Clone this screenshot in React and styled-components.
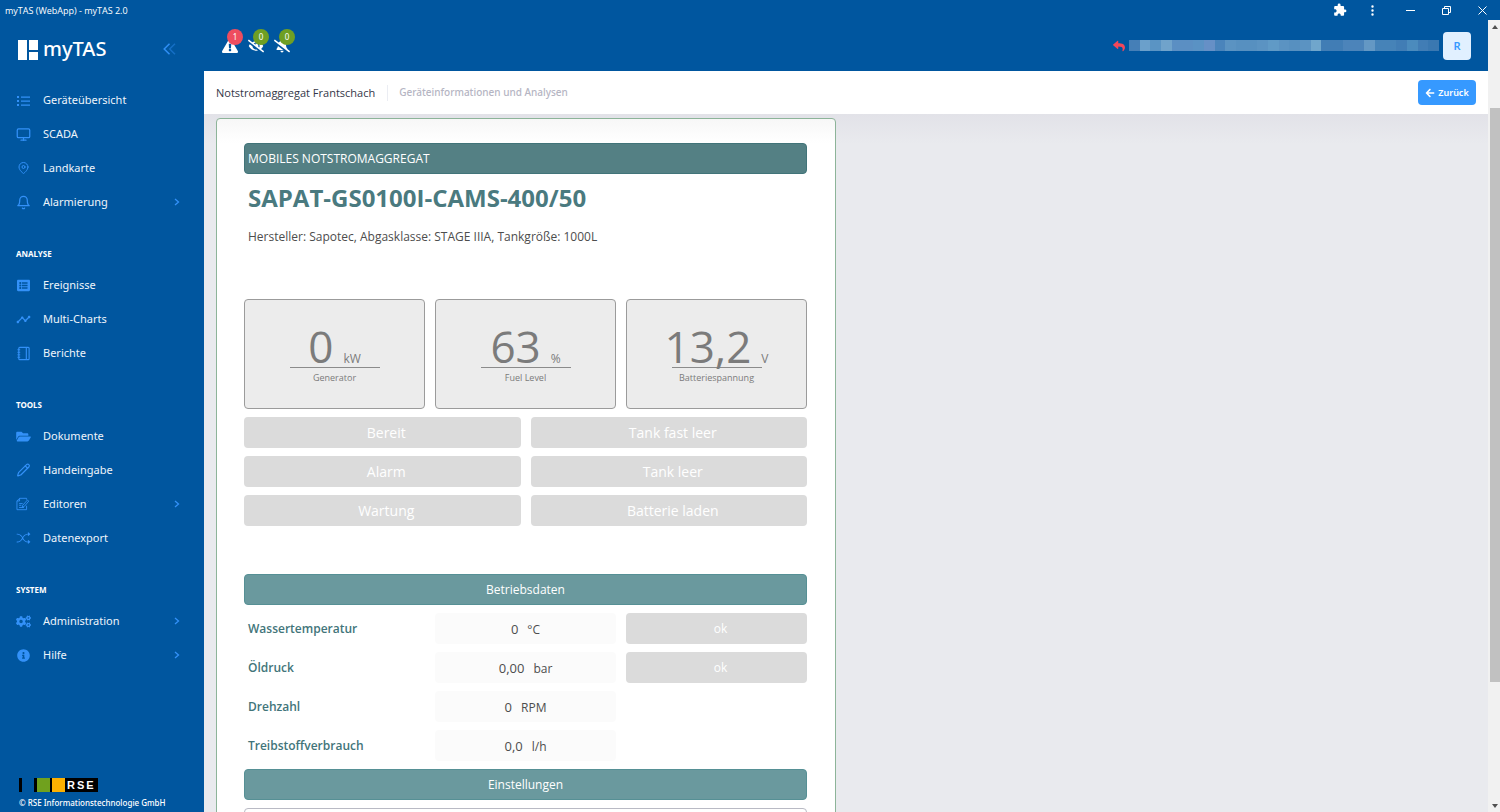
import React from "react";
import styled, { createGlobalStyle } from "styled-components";
import {
  FaArrowLeft,
  FaBellSlash,
  FaCogs,
  FaExclamationTriangle,
  FaEyeSlash,
  FaFolderOpen,
  FaInfoCircle,
  FaListAlt,
  FaReply,
} from "react-icons/fa";
import { BsShuffle, BsThreeDotsVertical } from "react-icons/bs";
import { FiBell, FiMapPin, FiMonitor } from "react-icons/fi";
import { LuPencil } from "react-icons/lu";
import { MdExtension, MdTimeline } from "react-icons/md";

const ListIcon = ({ className }) => (
  <svg className={className} viewBox="0 0 15 15" width="1em" height="1em" fill="currentColor">
    <path d="M1 3h2v2H1zM1 7h2v2H1zM1 11h2v2H1zM5 3.500h9v1.200H5zM5 7.500h9v1.200H5zM5 11.500h9v1.200H5z" />
  </svg>
);

const JournalIcon = ({ className }) => (
  <svg className={className} viewBox="0 0 16 16" width="1em" height="1em" fill="none" stroke="currentColor">
    <rect x="3" y="1.5" width="11" height="13" rx="1" strokeWidth="1.2" />
    <path d="M11 1.500v13" strokeWidth="1.2" />
    <path d="M1.500 4h3M1.500 6.700h3M1.500 9.400h3M1.500 12h3" />
  </svg>
);

const EditDocIcon = ({ className }) => (
  <svg className={className} viewBox="0 0 16 16" width="1em" height="1em" fill="none" stroke="currentColor">
    <path d="M11.500 3V1.500H3.500L.5 4.500v10h11V10" />
    <path d="M3.500 1.500v3h-3M3 7.500h4M3 9.500h2.500M3 12h5.500" />
    <path d="M7 9.500L12.500 3.500l1.500 1.200L8.700 11l-2 .5z" />
  </svg>
);

const navGroups = [
  {
    title: null,
    items: [
      { icon: ListIcon, name: "Geräteübersicht" },
      { icon: FiMonitor, name: "SCADA" },
      { icon: FiMapPin, name: "Landkarte", size: 12 },
      { icon: FiBell, name: "Alarmierung", more: true },
    ],
  },
  {
    title: "ANALYSE",
    items: [
      { icon: FaListAlt, name: "Ereignisse", size: 13 },
      { icon: MdTimeline, name: "Multi-Charts" },
      { icon: JournalIcon, name: "Berichte" },
    ],
  },
  {
    title: "TOOLS",
    items: [
      { icon: FaFolderOpen, name: "Dokumente", size: 13 },
      { icon: LuPencil, name: "Handeingabe", size: 14 },
      { icon: EditDocIcon, name: "Editoren", size: 14, more: true },
      { icon: BsShuffle, name: "Datenexport", size: 14 },
    ],
  },
  {
    title: "SYSTEM",
    items: [
      { icon: FaCogs, name: "Administration", more: true },
      { icon: FaInfoCircle, name: "Hilfe", size: 13, more: true },
    ],
  },
];

const alerts = [
  { icon: FaExclamationTriangle, count: 1, color: "#ee4d5f", label: "Alarme" },
  { icon: FaEyeSlash, count: 0, color: "#6f9f23", label: "Ausgeblendet" },
  { icon: FaBellSlash, count: 0, color: "#6f9f23", label: "Stumm" },
];

const maskedUser = [
  "#457fb7", "#6ba0cb", "#5a94c4", "#70a3cb", "#5b8fc3", "#5b8fc3", "#5a92c4",
  "#6690c6", "#4a84bb", "#5b93c2", "#5790c0", "#5790c0", "#5b93c2", "#609ac6",
  "#5b93c2", "#5790c0", "#5b93c2", "#70a6cc", "#417db5", "#417db5", "#4c84ba",
  "#4c84ba", "#6498c4", "#4683b8", "#4683b8", "#417db5", "#4b8bbd", "#417db5",
  "#3a78b1",
];

const gauges = [
  { value: "0", unit: "kW", name: "Generator" },
  { value: "63", unit: "%", name: "Fuel Level" },
  { value: "13,2", unit: "V", name: "Batteriespannung" },
];

const states = ["Bereit", "Tank fast leer", "Alarm", "Tank leer", "Wartung", "Batterie laden"];

const readings = [
  { name: "Wassertemperatur", value: "0", unit: "°C", state: "ok" },
  { name: "Öldruck", value: "0,00", unit: "bar", state: "ok" },
  { name: "Drehzahl", value: "0", unit: "RPM" },
  { name: "Treibstoffverbrauch", value: "0,0", unit: "l/h" },
];

const Chevron = () => (
  <svg width="6" height="8" viewBox="0 0 6 8" fill="none" stroke="currentColor" strokeWidth="1.300">
    <path d="M1 1l3.500 3L1 7" />
  </svg>
);

const App = () => {
  return (
    <>
      <GlobalStyle />
      <Window>
        <TitleBar>
          <span>myTAS (WebApp) - myTAS 2.0</span>
          <WindowControls>
            <button aria-label="Erweiterungen"><MdExtension size={14} /></button>
            <button aria-label="Menü"><BsThreeDotsVertical size={13} /></button>
            <button aria-label="Minimieren">
              <svg width="9" height="9" viewBox="0 0 9 9" stroke="currentColor"><path d="M0 4.500h9" /></svg>
            </button>
            <button aria-label="Verkleinern">
              <svg width="9" height="9" viewBox="0 0 9 9" fill="none" stroke="currentColor">
                <path d="M.5 2.500h6v6h-6zM2.500 2.500v-2h6v6h-2" />
              </svg>
            </button>
            <button aria-label="Schließen">
              <svg width="9" height="9" viewBox="0 0 9 9" stroke="currentColor"><path d="M.5.5l8 8M8.500.5l-8 8" /></svg>
            </button>
          </WindowControls>
        </TitleBar>
        <Body>
          <Sidebar>
            <Brand>
              <svg width="20" height="20" viewBox="0 0 20 20" fill="#fff">
                <path d="M0 0h9v20H0zM11 0h9v10h-9zM11 12h9v8h-9z" />
              </svg>
              <span>myTAS</span>
              <button aria-label="Menü einklappen">
                <svg width="13" height="12" viewBox="0 0 13 12" fill="none" stroke="#2f8ff5" strokeWidth="1.500">
                  <path d="M6.500 .7L1.200 6l5.300 5.300" />
                  <path d="M12 .7L6.700 6l5.300 5.300" opacity=".45" />
                </svg>
              </button>
            </Brand>
            <nav>
              {navGroups.map((group) => (
                <div key={group.items[0].name}>
                  {group.title && <NavTitle>{group.title}</NavTitle>}
                  {group.items.map((item) => (
                    <NavItem key={item.name} href="#" $size={item.size}>
                      <item.icon className="icon" />
                      <span>{item.name}</span>
                      {item.more && <Chevron />}
                    </NavItem>
                  ))}
                </div>
              ))}
            </nav>
            <SidebarFooter>
              <svg width="79" height="14" viewBox="0 0 79 14">
                <path d="M0 0h3v14H0zM15 0h64v14H15z" fill="#000" />
                <path d="M18 0h13v14H18z" fill="#70a11e" />
                <path d="M33 0h13v14H33z" fill="#fdb000" />
                <text x="48" y="11" fontSize="11" fontWeight="bold" fill="#fff" letterSpacing="2">RSE</text>
              </svg>
              <p>© RSE Informationstechnologie GmbH</p>
            </SidebarFooter>
          </Sidebar>
          <Main>
            <Header>
              <AlertList>
                {alerts.map((alert) => (
                  <AlertButton key={alert.label} aria-label={alert.label} $color={alert.color}>
                    <alert.icon size={16} />
                    <span>{alert.count}</span>
                  </AlertButton>
                ))}
              </AlertList>
              <User>
                <FaReply size={12} color="#f4475a" />
                <Masked>
                  {maskedUser.map((color, i) => (
                    <MaskCell key={i} $color={color} />
                  ))}
                </Masked>
                <Avatar>R</Avatar>
              </User>
            </Header>
            <SubHeader>
              <h1>Notstromaggregat Frantschach</h1>
              <span>Geräteinformationen und Analysen</span>
              <BackButton><FaArrowLeft size={10} />Zurück</BackButton>
            </SubHeader>
            <Content>
              <Card>
                <Bar $dark>MOBILES NOTSTROMAGGREGAT</Bar>
                <Model>SAPAT-GS0100I-CAMS-400/50</Model>
                <Info>Hersteller: Sapotec, Abgasklasse: STAGE IIIA, Tankgröße: 1000L</Info>
                <Gauges>
                  {gauges.map((gauge) => (
                    <Gauge key={gauge.name}>
                      <div className="value">
                        <strong>{gauge.value}</strong>
                        <span>{gauge.unit}</span>
                      </div>
                      <p>{gauge.name}</p>
                    </Gauge>
                  ))}
                </Gauges>
                <States>
                  {states.map((state) => (
                    <State key={state} $large>{state}</State>
                  ))}
                </States>
                <Bar>Betriebsdaten</Bar>
                <Readings>
                  <tbody>
                    {readings.map((row) => (
                      <tr key={row.name}>
                        <th scope="row">{row.name}</th>
                        <td className="reading">
                          {row.value}
                          <span>{row.unit}</span>
                        </td>
                        <td>{row.state && <State>{row.state}</State>}</td>
                      </tr>
                    ))}
                  </tbody>
                </Readings>
                <Bar>Einstellungen</Bar>
                <Setting aria-label="Einstellung" />
              </Card>
            </Content>
          </Main>
          <Scrollbar>
            <svg width="8" height="5" viewBox="0 0 8 5"><path d="M4 0l3 4H1z" fill="#505050" /></svg>
            <Track $grow={78} />
            <Track $grow={574} $thumb />
            <Track $grow={121} />
            <svg width="8" height="5" viewBox="0 0 8 5"><path d="M4 5l3-4H1z" fill="#505050" /></svg>
          </Scrollbar>
        </Body>
      </Window>
    </>
  );
};

const GlobalStyle = createGlobalStyle`
  * {
    box-sizing: border-box;
  }
  body {
    margin: 0;
    overflow: hidden;
    font-family: "Noto Sans", "Open Sans", sans-serif;
  }
  h1, h2, h3, p {
    margin: 0;
  }
  button {
    border: 0;
    padding: 0;
    background: none;
    color: inherit;
    font-family: inherit;
    cursor: pointer;
  }
  svg {
    flex-shrink: 0;
  }
`;

const Window = styled.div`
  display: flex;
  flex-direction: column;
  height: 100vh;
  background: #00569f;
`;

const TitleBar = styled.header`
  display: flex;
  align-items: center;
  justify-content: space-between;
  height: 20px;
  flex-shrink: 0;
  padding-left: 5px;
  font-family: "Open Sans", sans-serif;
  font-size: 9px;
  font-weight: 500;
  color: #fff;
`;

const WindowControls = styled.div`
  display: flex;
  button {
    display: flex;
    align-items: center;
    justify-content: center;
    width: 36px;
    height: 20px;
  }
  button:nth-child(1) {
    width: 24px;
  }
  button:nth-child(2) {
    width: 40px;
  }
`;

const Body = styled.div`
  display: flex;
  flex: 1;
  min-height: 0;
`;

const Sidebar = styled.aside`
  display: flex;
  flex-direction: column;
  width: 204px;
  flex-shrink: 0;
`;

const Brand = styled.div`
  display: flex;
  align-items: center;
  height: 63px;
  padding: 0 28px 4px 18px;
  gap: 5px;
  color: #fff;
  font-size: 20px;
  font-weight: 500;
  span {
    padding-bottom: 2px;
  }
  button {
    margin-left: auto;
  }
`;

const NavTitle = styled.h2`
  padding: 27px 16px 6px;
  font-size: 8px;
  line-height: 16px;
  font-weight: 700;
  color: #fff;
`;

const NavItem = styled.a`
  display: flex;
  align-items: center;
  height: 34px;
  padding: 0 24px 0 16px;
  gap: 12px;
  font-size: 11px;
  color: #eef4fb;
  text-decoration: none;
  span {
    flex: 1;
    padding-bottom: 2px;
  }
  svg {
    color: #3391f8;
  }
  .icon {
    width: 15px;
    font-size: ${({ $size }) => $size || 15}px;
  }
`;

const SidebarFooter = styled.footer`
  margin-top: auto;
  padding: 0 19px 3px;
  color: #fff;
  font-size: 8px;
  font-weight: 500;
  svg {
    display: block;
    font-family: "Liberation Sans", sans-serif;
  }
  p {
    margin-top: 4px;
    line-height: 13px;
    white-space: nowrap;
  }
`;

const Main = styled.main`
  display: flex;
  flex-direction: column;
  flex: 1;
  min-width: 0;
`;

const Header = styled.div`
  display: flex;
  align-items: center;
  justify-content: space-between;
  height: 51px;
  flex-shrink: 0;
  padding: 0 17px 0 18px;
`;

const AlertList = styled.div`
  display: flex;
  gap: 10px;
`;

const AlertButton = styled.button`
  position: relative;
  display: flex;
  color: #fff;
  span {
    position: absolute;
    top: -9px;
    left: 5px;
    width: 16px;
    height: 16px;
    border-radius: 50%;
    background: ${({ $color }) => $color};
    font-size: 8px;
    line-height: 15px;
    text-align: center;
  }
`;

const User = styled.div`
  display: flex;
  align-items: center;
  gap: 4px;
`;

const Masked = styled.div`
  display: flex;
  width: 310px;
  height: 11px;
`;

const MaskCell = styled.div`
  flex: 1;
  background: ${({ $color }) => $color};
`;

const Avatar = styled.button`
  width: 28px;
  height: 28px;
  border-radius: 4px;
  background: #e1f0ff;
  color: #3699ff;
  font-size: 11px;
  font-weight: 600;
`;

const SubHeader = styled.div`
  display: flex;
  align-items: center;
  height: 43px;
  flex-shrink: 0;
  padding: 0 12px;
  background: #fff;
  h1 {
    padding-right: 12px;
    border-right: 1px solid #ebedf3;
    font-family: "Open Sans", sans-serif;
    font-size: 11px;
    line-height: 16px;
    font-weight: 500;
    color: #343748;
  }
  > span {
    padding: 0 0 2px 11px;
    font-size: 10px;
    font-weight: 500;
    color: #b5b5c3;
  }
`;

const BackButton = styled.button`
  display: flex;
  align-items: center;
  justify-content: center;
  gap: 3px;
  width: 58px;
  height: 25px;
  margin-left: auto;
  border-radius: 4px;
  background: #3699ff;
  color: #fff;
  font-size: 9px;
  font-weight: 600;
`;

const Content = styled.div`
  flex: 1;
  min-height: 0;
  overflow: hidden;
  padding: 4px 12px 0;
  background: linear-gradient(#e2e2e8, #e9eaee 30px);
`;

const Card = styled.section`
  max-width: 620px;
  padding: 24px 28px 24px 27px;
  border: 1px solid #8db499;
  border-radius: 4px;
  background: linear-gradient(#f7f7f7, #fff 24px);
  font-family: "Open Sans", sans-serif;
`;

const Bar = styled.h2`
  height: 31px;
  padding: 0 3px;
  border: 1px solid ${({ $dark }) => ($dark ? "#417479" : "#569095")};
  border-radius: 4px;
  background: ${({ $dark }) => ($dark ? "#548084" : "#6a999e")};
  color: #fff;
  font-size: 12px;
  line-height: 30px;
  font-weight: 400;
  text-align: ${({ $dark }) => ($dark ? "left" : "center")};
`;

const Model = styled.h3`
  margin-top: 8px;
  padding-left: 4px;
  font-size: 24px;
  line-height: 31px;
  font-weight: 700;
  color: #4a7a7f;
`;

const Info = styled.p`
  margin-top: 8px;
  padding-left: 4px;
  font-size: 12px;
  line-height: 32px;
  color: #4d4d4d;
`;

const Gauges = styled.div`
  display: grid;
  grid-template-columns: repeat(3, 1fr);
  gap: 10px;
  margin-top: 46px;
`;

const Gauge = styled.div`
  display: flex;
  flex-direction: column;
  align-items: center;
  height: 110px;
  padding-top: 23px;
  border: 1px solid #9b9b9b;
  border-radius: 4px;
  background: #ececec;
  color: #7b7b7b;
  .value {
    display: flex;
    align-items: baseline;
    justify-content: center;
    gap: 10px;
    width: 90px;
    height: 45px;
    border-bottom: 1px solid #8b8b8b;
    line-height: 46px;
  }
  strong {
    font-size: 44px;
    font-weight: 400;
  }
  span {
    font-size: 12px;
  }
  p {
    margin-top: 2px;
    font-size: 9px;
    line-height: 16px;
  }
`;

const States = styled.div`
  display: grid;
  grid-template-columns: repeat(2, 1fr);
  gap: 8px 10px;
  margin: 8px 0 48px;
`;

const State = styled.div`
  height: 31px;
  padding-left: 8px;
  border-radius: 4px;
  background: #dbdbdb;
  color: #fff;
  font-size: ${({ $large }) => ($large ? "14px" : "12px")};
  line-height: 31px;
  text-align: center;
`;

const Readings = styled.table`
  display: block;
  margin: 8px 0;
  tbody {
    display: grid;
    gap: 8px;
  }
  tr {
    display: grid;
    grid-template-columns: repeat(3, 1fr);
    gap: 10px;
    font-size: 12px;
    line-height: 32px;
  }
  th {
    height: 31px;
    padding: 0 0 0 4px;
    color: #42757a;
    font-weight: 600;
    text-align: left;
  }
  td {
    height: 31px;
    padding: 0;
  }
  .reading {
    border-radius: 4px;
    background: #fbfbfb;
    color: #4d4d4d;
    font-size: 13px;
    text-align: center;
  }
  .reading span {
    margin-left: 9px;
    font-size: 12px;
  }
`;

const Setting = styled.input`
  display: block;
  width: 100%;
  height: 31px;
  margin-top: 8px;
  border: 1px solid #b9bac4;
  border-radius: 4px;
  background: #fff;
`;

const Scrollbar = styled.div`
  display: flex;
  flex-direction: column;
  align-items: center;
  width: 12px;
  padding: 5px 0 4px 2px;
  background: #f1f1f1;
`;

const Track = styled.div`
  flex: ${({ $grow }) => $grow} 0 0;
  width: 100%;
  background: ${({ $thumb }) => ($thumb ? "#c1c1c1" : "transparent")};
`;

export default App;
